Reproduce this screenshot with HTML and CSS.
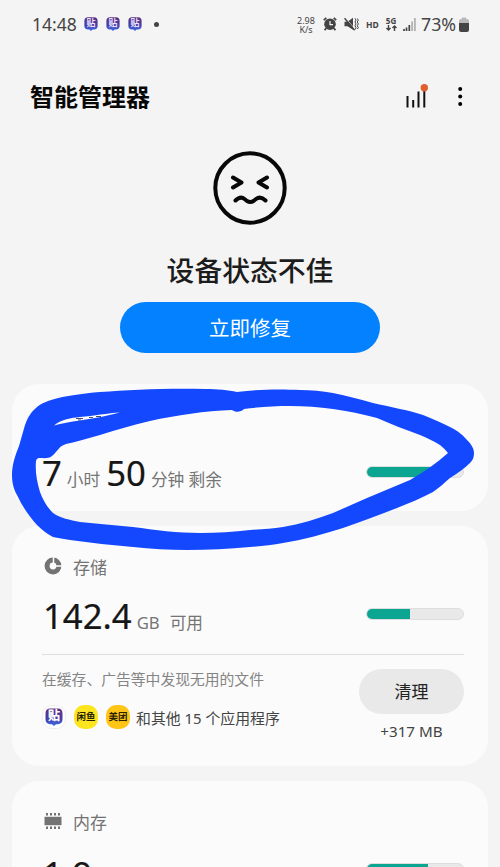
FILE: index.html
```html
<!DOCTYPE html>
<html lang="zh-CN">
<head>
<meta charset="utf-8">
<title>智能管理器</title>
<link rel="stylesheet" href="styles.css">
</head>
<body>
<svg class="defs" width="0" height="0">
  <defs>
    <linearGradient id="tie" x1="0" y1="0" x2="0" y2="1"><stop offset="0" stop-color="#5e2f80"/><stop offset=".6" stop-color="#463fa8"/><stop offset="1" stop-color="#3a6df0"/></linearGradient>
    <symbol id="bubble" viewBox="0 0 14 14"><path d="M4 .3h6Q13.6.3 13.6 4v5Q13.6 12.3 10 12.6H8.6L7 14 5.4 12.6H4Q.4 12.3.4 9V4Q.4.3 4 .3Z" fill="url(#tie)"/></symbol>
  </defs>
</svg>
<div class="phone">
  <header class="status-bar">
    <span class="clock">14:48</span>
    <span class="tieba"><svg><use href="#bubble"/></svg><b>贴</b></span>
    <span class="tieba"><svg><use href="#bubble"/></svg><b>贴</b></span>
    <span class="tieba"><svg><use href="#bubble"/></svg><b>贴</b></span>
    <i class="dot"></i>
    <span class="speed"><span>2.98</span><span>K/s</span></span>
    <svg class="alarm" width="14" height="14" viewBox="0 0 14 14"><path d="M3 11.2 1.6 13.2M11 11.2l1.4 2M.8 3.2 3.3.9M13.2 3.2 10.7.9" stroke="#444" stroke-width="1.8"/><circle cx="7" cy="7.2" r="5.8" fill="#444"/><path d="M7 4v3.600h3" fill="none" stroke="#f4f4f4" stroke-width="1.200"/></svg>
    <svg class="mute" width="15" height="14" viewBox="0 0 15 14"><path d="M.5 4.700h3L9 .8v12L3.500 9.300h-3Z" fill="#444"/><path d="m1.400 .7 10 12" stroke="#f4f4f4" stroke-width=".8"/><path d="m.6 1.200 10 12" stroke="#444" stroke-width="1.400"/><path d="m11 1.300 1 1.800L11 5l1 1.900-1 1.900 1 1.800-.8 1.900M13.300 1.500l1 1.600L13.300 5l1 1.900-1 1.900 1 1.800-1 1.400" fill="none" stroke="#444"/></svg>
    <span class="hd">HD</span>
    <span class="fiveg">5G<svg width="11" height="6" viewBox="0 0 11 6"><path d="M2.500 0v5M.500 3l2 2 2-2M8.500 6V1M6.500 3l2-2 2 2" fill="none" stroke="#444" stroke-width="1.400"/></svg></span>
    <svg class="signal" width="13" height="14" viewBox="0 0 13 14"><path d="M1 12v2M3.500 10.500V14M6.300 8v6" stroke="#444" stroke-width="1.700"/><path d="M9.100 4.500V14M11.900 1v13" stroke="#b5b5b5" stroke-width="1.900"/></svg>
    <span class="percent">73%</span>
    <svg class="battery" width="10" height="15" viewBox="0 0 10 15"><path d="M0 4q0-2 2-2h.800V.500h4.400V2H8q2 0 2 2v2H0Z" fill="#b9b9b9"/><path d="M0 6h10v7q0 2-2 2H2q-2 0-2-2Z" fill="#444"/></svg>
  </header>

  <div class="app-bar">
    <h1>智能管理器</h1>
    <svg width="25" height="26" viewBox="0 0 25 26"><path d="M3.500 12v11.500M9.200 16v7.500M14.500 7.500v16M20.300 5v18.500" stroke="#111" stroke-width="2"/><circle cx="20.300" cy="3.800" r="3.700" fill="#df602b"/></svg>
    <svg class="more" width="6" height="20" viewBox="0 0 6 20"><g fill="#000"><circle cx="3.200" cy="2" r="2"/><circle cx="3.200" cy="9.500" r="2"/><circle cx="3.200" cy="17" r="2"/></g></svg>
  </div>

  <section class="hero">
    <svg width="74" height="74" viewBox="0 0 74 74" fill="none" stroke="#080808" stroke-width="4" stroke-linecap="round" stroke-linejoin="round"><circle cx="37" cy="37" r="34.700"/><path d="M20 26.500 28.500 31.500 20 36.500M54 26.500 45.500 31.500 54 36.500"/><path d="M22.500 49.500Q27.500 44.500 31.500 48L34 50Q37.300 52 40.500 50L43 48Q47.500 44.500 52.500 49.500"/></svg>
    <h2>设备状态不佳</h2>
    <button class="fix">立即修复</button>
  </section>

  <main class="cards">
    <section class="card battery-card">
      <div class="label"><i class="bolt"></i><span>电池</span></div>
      <div class="row">
        <p class="value"><b>7</b><span class="hours">小时</span><b>50</b><span class="mins">分钟 剩余</span></p>
        <div class="meter"><i style="width:73%"></i></div>
      </div>
    </section>

    <section class="card storage-card">
      <div class="label"><svg width="18" height="18" viewBox="0 0 18 18"><circle cx="9" cy="9" r="5.900" fill="none" stroke="#737373" stroke-width="5"/><path d="M9.500 9V0M9 9h9" stroke="#fbfbfb" stroke-width="1.500"/></svg><span>存储</span></div>
      <div class="row">
        <p class="value"><b>142.4</b><span class="gb">GB</span><span class="free">可用</span></p>
        <div class="meter"><i style="width:45%"></i></div>
      </div>
      <div class="cleanup">
        <div class="found">
          <p class="hint">在缓存、广告等中发现无用的文件</p>
          <div class="apps">
            <span class="app tb"><svg><use href="#bubble"/></svg><b>贴</b></span>
            <span class="app xy">闲鱼</span>
            <span class="app mt">美团</span>
            <span class="others">和其他 15 个应用程序</span>
          </div>
        </div>
        <div class="action"><button class="clean">清理</button><span class="gain">+317 MB</span></div>
      </div>
    </section>

    <section class="card memory-card">
      <div class="label"><svg width="18" height="18" viewBox="0 0 18 18"><path d="M.500 4.800h17v8.400H.500Z" fill="#737373"/><path d="M2 2.300h14M2 15.700h14" stroke="#737373" stroke-width="2.400" stroke-dasharray="2 2"/></svg><span>内存</span></div>
      <div class="row">
        <p class="value"><b>1.9</b></p>
        <div class="meter"><i style="width:64%"></i></div>
      </div>
    </section>
  </main>

  <svg class="scribble" width="500" height="867" viewBox="0 0 500 867">
    <path fill="#1448ff" d="M37 407C45 400 65 395 100 392C130 390 165 388 205 389C218 389 228 390 237 392C260 389 282 389 300 390C311 390 322 391 333 393C347 396 360 399 373 403C390 407 408 410 423 415C433 419 442 423 450 427C458 431 463 435 467 440C472 445 474 449 474 453C474 457 473 460 470 463C465 468 458 473 450 478C444 483 439 488 433 492C422 498 409 503 397 508C380 515 362 521 343 528C323 534 303 540 283 543C272 545 261 546 250 547C229 549 208 550 187 550C169 550 151 549 133 547C112 545 91 543 70 540C64 539 58 538 53 537C47 534 42 530 37 525C29 516 22 506 17 495C13 488 12 481 12 475C12 465 15 456 19 446L25 425C28 417 31 412 37 407ZM52 456C46 461 37 455 36 461C35 472 37 482 40 492C43 500 47 507 53 513C60 518 70 520 80 522C97 524 115 525 133 527C155 530 178 533 200 533C217 533 234 532 250 530C261 529 272 529 283 527C300 524 317 519 333 513L367 498L410 480C424 472 437 463 448 453Q445 449 440 445C434 441 427 438 420 435C406 430 391 424 377 418C362 414 348 411 333 409C319 407 305 406 290 406C275 406 260 407 244 409C241 412 236 413 232 410C205 411 177 415 150 421C132 425 116 430 100 435C88 438 76 442 66 444C59 446 58 451 52 456Z" fill-rule="evenodd"/>
    <path fill="#fbfbfb" d="M54 425.500C62 419 71 418 80 417C94 416 108 413 120 412.500C108 415.500 94 418.500 80 420.500C70 422 62 423 54 425.500Z"/>
    <path d="M76 418.500h7M78 420h3M89 417.500h4M96 416.500h5" stroke="#44516f" stroke-width="1"/>
  </svg>
</div>
</body>
</html>
```
FILE: styles.css
```css
* { box-sizing: border-box; margin: 0; padding: 0; }
body { background: #f4f4f4; overflow: hidden; font-family: "Noto Sans", "Noto Sans CJK SC", sans-serif; }
svg { display: block; flex: none; }
button { border: 0; font-family: inherit; }
.defs { position: absolute; }
.phone { position: relative; width: 500px; height: 867px; overflow: hidden; }

.status-bar { display: flex; align-items: center; height: 48px; padding-left: 32px; color: #444; white-space: nowrap; }
.clock { width: 52px; font-size: 17.5px; }
.tieba { position: relative; width: 14px; height: 14px; margin-right: 8px; }
.tieba svg { width: 14px; height: 14px; }
.tieba b { position: absolute; inset: 0; font-size: 9px; line-height: 12px; text-align: center; color: #e8e4ff; }
.dot { width: 5px; height: 5px; margin-left: 4px; border-radius: 50%; background: #444; }
.speed { display: flex; flex-direction: column; align-items: center; width: 20px; margin-left: 137px; font-size: 9px; line-height: 9px; padding-top: 1px; }
.alarm { margin-left: 7px; }
.mute { margin-left: 7px; }
.hd { width: 13px; margin-left: 7px; font-size: 8.500px; font-weight: 700; }
.fiveg { display: flex; flex-direction: column; align-items: center; width: 12px; margin-left: 6px; font-size: 8px; line-height: 8px; font-weight: 700; }
.signal { margin-left: 6px; }
.percent { width: 39px; margin-left: 5px; font-size: 17.800px; }
.battery { margin-left: -1px; }

.app-bar { display: flex; align-items: center; height: 98px; padding-left: 30px; }
h1 { width: 375px; font-size: 24px; line-height: 36px; font-weight: 700; color: #080808; }
.app-bar svg { margin-left: -1px; }
.app-bar .more { margin-left: 28px; }

.hero { display: flex; flex-direction: column; align-items: center; padding-top: 5px; height: 238px; }
h2 { margin-top: 24px; font-family: "Noto Sans CJK SC", sans-serif; font-size: 27.800px; line-height: 40px; font-weight: 500; color: #1c1c1c; }
.fix { width: 260px; height: 51px; margin-top: 13px; padding-top: 2px; border-radius: 26px; background: #0381fe; color: #fff; font-size: 20.500px; line-height: 49px; }

.cards { display: grid; gap: 15px; padding: 0 12px; }
.card { width: 476px; border-radius: 27px; background: #fbfbfb; padding: 0 24px 0 30px; }
.battery-card { height: 127px; padding-top: 20px; }
.storage-card { height: 240px; padding-top: 24px; }
.memory-card { height: 240px; padding-top: 24px; }
.label { display: flex; align-items: center; height: 32px; padding-left: 2px; font-size: 17px; color: #737373; }
.label span { margin-left: 11px; }
.bolt { width: 18px; height: 18px; border-radius: 50%; background: #737373; }
.row { display: flex; justify-content: space-between; align-items: center; height: 64px; }
.battery-card .row { height: 71px; }
.value { display: flex; align-items: baseline; padding-top: 10px; color: #757575; font-size: 16.700px; line-height: 50px; white-space: pre; }
.value b { font-size: 34.700px; font-weight: 400; color: #161616; -webkit-text-stroke: .2px #161616; }
.storage-card .value, .memory-card .value { margin-left: 1px; }
.hours { margin: 0 6px 0 5px; }
.mins { margin-left: 5px; }
.gb { margin-left: 5px; }
.free { margin-left: 10px; }
.meter { width: 98px; height: 12px; border-radius: 6px; background: #e9e9e9; border: 1px solid #dedede; overflow: hidden; }
.meter i { display: block; height: 100%; background: #0ba592; }
.cleanup { display: flex; justify-content: space-between; border-top: 1px solid #dedede; margin-top: 8px; }
.hint { margin-top: 13px; font-size: 14.800px; line-height: 22px; color: #858585; white-space: nowrap; }
.apps { display: flex; align-items: center; gap: 8px; margin-top: 15px; height: 24px; }
.app { position: relative; width: 24px; height: 24px; border-radius: 10px; font-size: 9.500px; line-height: 23px; font-weight: 700; text-align: center; color: #292000; white-space: nowrap; }
.tb { background: #fff; border: 1px solid #eee; }
.tb svg { width: 18px; height: 18px; margin: 2px; }
.tb b { position: absolute; inset: 0; font-size: 12px; line-height: 20px; color: #fff; }
.xy { background: #fce51f; }
.mt { background: #ffc516; }
.others { margin-left: -2px; font-size: 14.900px; color: #444; white-space: nowrap; }
.action { display: flex; flex-direction: column; align-items: center; width: 105px; margin-top: 14px; }
.clean { width: 105px; height: 45px; border-radius: 23px; background: #e9e9e9; font-size: 17px; line-height: 45px; color: #222; }
.gain { margin-top: 7px; font-size: 15.200px; line-height: 20px; color: #444; }
.scribble { position: absolute; left: 0; top: 0; }
```
